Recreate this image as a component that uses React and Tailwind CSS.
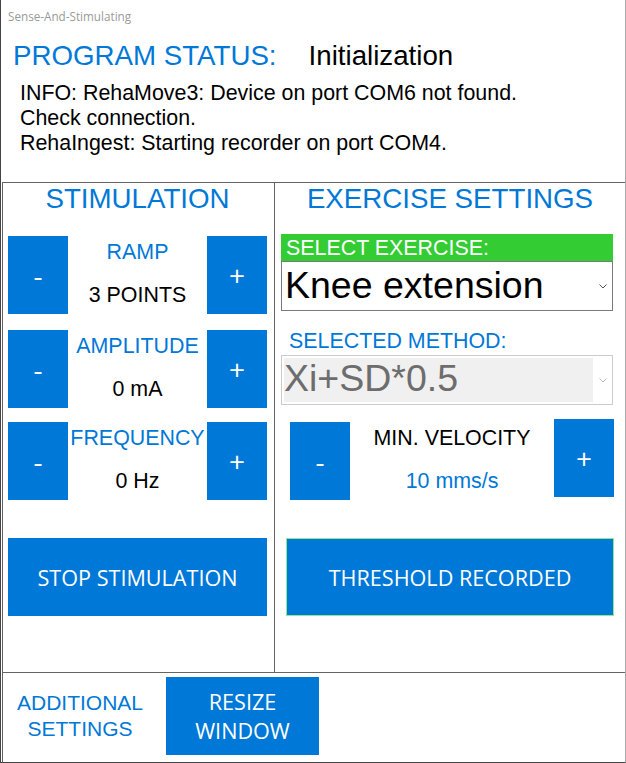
import React from 'react';

const arial = "font-['Liberation_Sans',Arial,sans-serif]";
const segoe = "font-['Open_Sans','Noto_Sans',sans-serif]";

const Chevron = ({ className }) => (
  <svg width="8" height="5" viewBox="0 0 8 5" className={className}>
    <polyline points="0.5,0.5 4,4 7.5,0.5" fill="none" stroke="currentColor" strokeWidth="1" />
  </svg>
);

const StepButton = ({ sign, className = '' }) => (
  <button
    className={`w-[60px] h-[78px] shrink-0 bg-[#0078d7] text-white flex items-center justify-center text-[28px] leading-none ${segoe} ${className}`}
  >
    {sign}
  </button>
);

const Stepper = ({ label, value, className = '' }) => (
  <div className={`flex ${className}`}>
    <StepButton sign="-" />
    <div className="flex-1 flex flex-col items-center">
      <div className="text-[21.4px] leading-[32px] text-[#0078d7]">{label}</div>
      <div className="mt-[15px] text-[21.4px] leading-[24px] text-black">{value}</div>
    </div>
    <StepButton sign="+" />
  </div>
);

const BigButton = ({ children, className = '' }) => (
  <button
    className={`h-[78px] bg-[#0078d7] text-white text-[21.6px] leading-[29px] flex items-center justify-center ${segoe} ${className}`}
  >
    {children}
  </button>
);

export default function App() {
  return (
    <div
      className={`w-[626px] h-[763px] bg-white flex flex-col border-l border-l-[#454545] border-r border-r-[#a8a8a8] border-b border-b-[#454545] ${arial}`}
    >
      {/* header */}
      <div className="h-[182px] shrink-0">
        <div className={`pt-[8px] pl-[7px] text-[11.7px] leading-[16px] text-[#9a9a9a] ${segoe}`}>
          Sense-And-Stimulating
        </div>
        <div className="mt-[17px] pl-[12px] flex text-[27.7px] leading-[30px]">
          <span className="text-[#0078d7]">PROGRAM STATUS:</span>
          <span className="ml-[32px] text-black">Initialization</span>
        </div>
        <div className="mt-[10px] pl-[19px] text-[21.4px] leading-[25px] text-black">
          <div>INFO: RehaMove3: Device on port COM6 not found.</div>
          <div>Check connection.</div>
          <div>RehaIngest: Starting recorder on port COM4.</div>
        </div>
      </div>

      {/* panels */}
      <div className="flex-1 ml-[1px] flex flex-col border-l border-t border-[#646464]">
        <div className="h-[489px] shrink-0 flex">
          {/* stimulation */}
          <div className="w-[272px] shrink-0 border-r border-[#646464] pl-[5px] pr-[7px] flex flex-col">
            <div className="pt-[1px] text-center text-[27.7px] leading-[30px] text-[#0078d7]">STIMULATION</div>
            <Stepper className="mt-[22px]" label="RAMP" value="3 POINTS" />
            <Stepper className="mt-[16px]" label="AMPLITUDE" value="0 mA" />
            <Stepper className="mt-[14px]" label="FREQUENCY" value="0 Hz" />
            <BigButton className="mt-[38px] w-full">STOP STIMULATION</BigButton>
          </div>

          {/* exercise settings */}
          <div className="flex-1 flex flex-col">
            <div className="pt-[1px] text-center text-[27.7px] leading-[30px] text-[#0078d7]">EXERCISE SETTINGS</div>

            <div className="mt-[20px] ml-[6px] w-[332px]">
              <div className="h-[27px] bg-[#33cc33] pl-[5px] pt-[2px] text-[21.4px] leading-[25px] text-white">
                SELECT EXERCISE:
              </div>
              <div className="h-[50px] border border-[#7a7a7a] flex items-center">
                <div className="pl-[3px] pb-[3px] text-[37.5px] leading-[40px] text-black">Knee extension</div>
                <Chevron className="ml-auto mr-[5px] text-[#555555]" />
              </div>
            </div>

            <div className="mt-[18px] ml-[14px] text-[21.4px] leading-[25px] text-[#0078d7]">SELECTED METHOD:</div>
            <div className="mt-[1px] ml-[6px] w-[332px] h-[50px] border border-[#cccccc] p-[2px] flex items-center">
              <div className="w-[309px] h-full bg-[#f0f0f0] flex items-center">
                <div className="pb-[4px] text-[37.5px] leading-[40px] text-[#6d6d6d]">Xi+SD*0.5</div>
              </div>
              <Chevron className="ml-auto mr-[3px] text-[#bbbbbb]" />
            </div>

            <div className="mt-[14px] ml-[15px] w-[324px] flex items-start">
              <StepButton sign="-" className="mt-[3px]" />
              <div className="flex-1 mt-[3px] flex flex-col items-center">
                <div className="text-[21.4px] leading-[32px] text-black">MIN. VELOCITY</div>
                <div className="mt-[15px] text-[21.4px] leading-[24px] text-[#0078d7]">10 mms/s</div>
              </div>
              <StepButton sign="+" />
            </div>

            <BigButton className="mt-[38px] ml-[11px] w-[328px] border border-[#90e890]">THRESHOLD RECORDED</BigButton>
          </div>
        </div>

        {/* bottom row */}
        <div className="flex-1 border-t border-[#646464] flex items-start">
          <div className="mt-[4px] w-[154px] h-[78px] flex flex-col items-center justify-center text-center text-[21px] leading-[26px] text-[#0078d7]">
            <div>ADDITIONAL</div>
            <div>SETTINGS</div>
          </div>
          <BigButton className="mt-[4px] ml-[9px] w-[153px] flex-col">
            <span>RESIZE</span>
            <span>WINDOW</span>
          </BigButton>
        </div>
      </div>
    </div>
  );
}
